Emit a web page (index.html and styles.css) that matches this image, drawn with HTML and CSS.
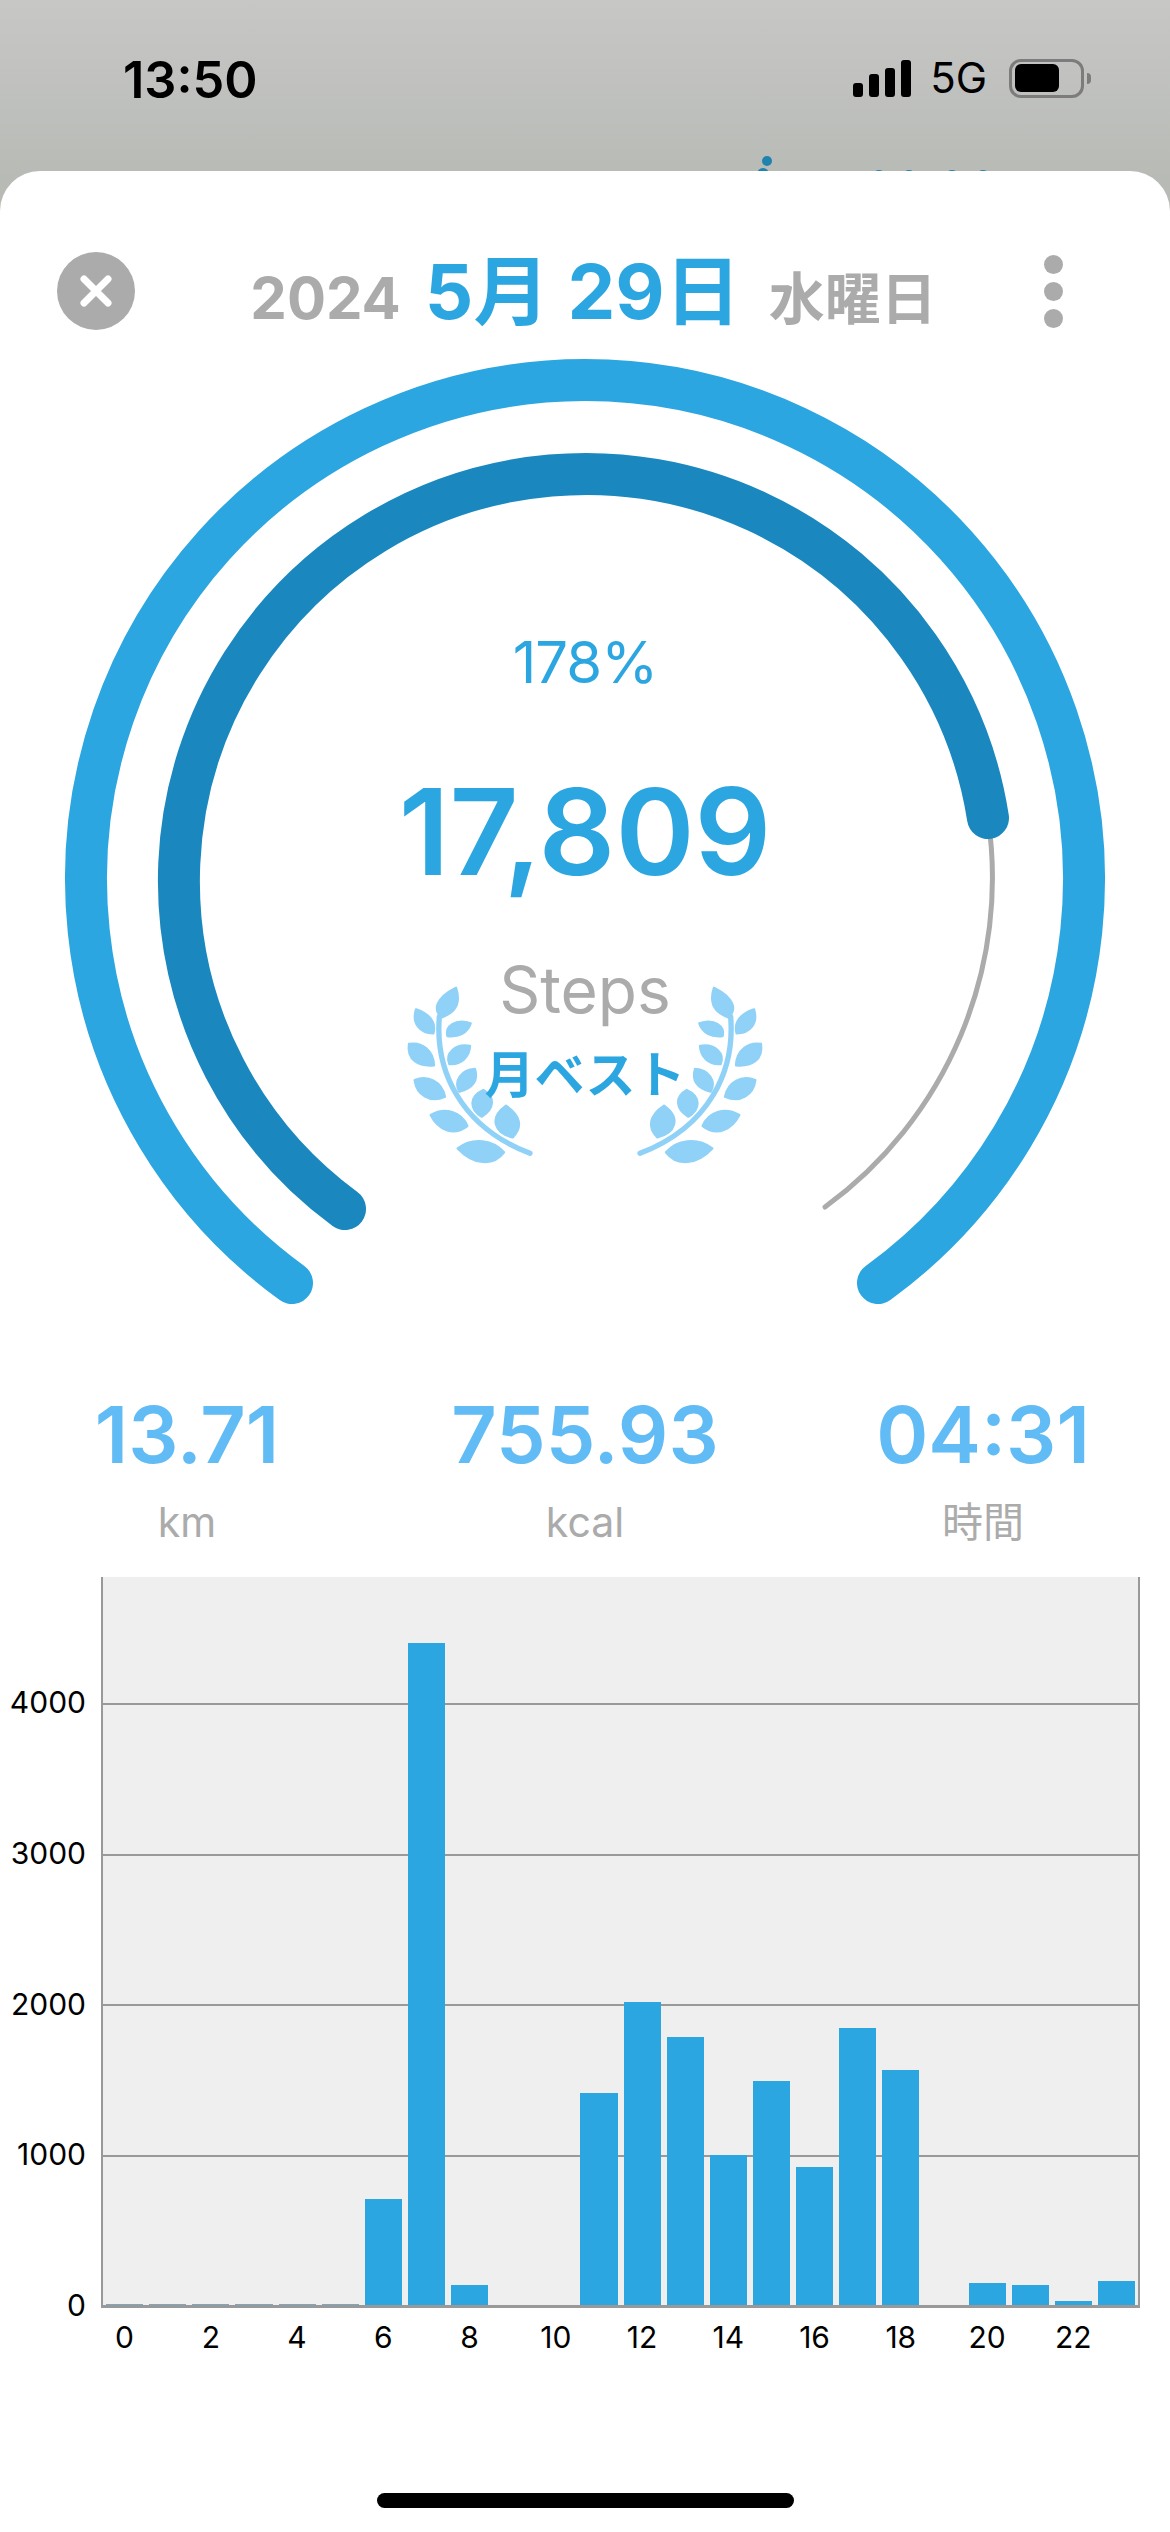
FILE: index.html
```html
<!DOCTYPE html>
<html lang="ja">
<head>
  <meta charset="UTF-8">
  <title>Steps</title>
  <meta name="viewport" content="width=device-width, initial-scale=1.0">
  <link rel="stylesheet" href="styles.css">
</head>
<body>
  <div class="status">
    <div class="time">13:50</div>
    <div class="status-right">
      <div class="signal">
        <span class="sig1"></span><span class="sig2"></span><span class="sig3"></span><span class="sig4"></span>
      </div>
      <div class="net">5G</div>
      <div class="battery"><div class="battery-fill"></div></div>
      <div class="battery-nub"></div>
    </div>
    <span class="peek-dot peek-a"></span>
    <span class="peek-dot peek-b"></span>
    <span class="peek-dot peek-c"></span>
    <span class="peek-dot peek-d"></span>
    <span class="peek-dot peek-e"></span>
    <span class="peek-dot peek-f"></span>
  </div>

  <div class="sheet">
    <div class="header">
      <div class="close">
        <svg width="32" height="32" viewBox="0 0 32 32">
          <path d="M4 4 L28 28 M28 4 L4 28" fill="none" stroke="#fff" stroke-width="7" stroke-linecap="round"/>
        </svg>
      </div>
      <div class="date">
        <span class="year">2024</span>
        <span class="day">5月 29日</span>
        <span class="weekday">水曜日</span>
      </div>
      <div class="more"><span></span><span></span><span></span></div>
    </div>

    <div class="gauge">
      <svg class="rings" width="1170" height="1045" viewBox="0 0 1170 1045">
        <path class="ring-outer" d="M292 953 A499 499 0 1 1 878 953"/>
        <path class="ring-goal" d="M988 488 A407 407 0 0 1 825 877"/>
        <path class="ring-inner" d="M345 879 A407 407 0 1 1 988 488"/>
      </svg>
      <div class="percent">178%</div>
      <div class="steps">17,809</div>
      <div class="steps-label">Steps</div>
      <svg class="laurel" width="410" height="260" viewBox="0 0 1230 780">
        <defs>
          <g id="branch">
            <path class="laurel-stem" d="M178 290 C165 450 240 620 450 700"/>
            <path d="M185 292 C160 270 165 235 228 203 C240 240 235 275 185 292Z"/>
            <path d="M160 340 C120 340 95 310 108 268 C145 280 170 305 160 340Z"/>
            <path d="M202 348 C195 320 225 295 272 310 C262 340 235 352 202 348Z"/>
            <path d="M162 436 C115 440 80 420 87 372 C125 365 160 390 162 436Z"/>
            <path d="M208 432 C195 400 225 370 270 378 C268 410 245 435 208 432Z"/>
            <path d="M195 530 C150 550 110 525 104 480 C145 465 185 485 195 530Z"/>
            <path d="M238 515 C220 480 245 450 285 447 C295 480 280 505 238 515Z"/>
            <path d="M262 618 C220 650 175 630 152 585 C195 560 245 575 262 618Z"/>
            <path d="M305 590 C270 570 265 530 310 510 C345 530 345 565 305 590Z"/>
            <path d="M372 697 C340 740 280 735 233 685 C280 650 340 660 372 697Z"/>
            <path d="M398 652 C345 640 325 595 378 557 C420 585 430 620 398 652Z"/>
          </g>
        </defs>
        <use href="#branch"/>
        <use href="#branch" transform="translate(1230 0) scale(-1 1)"/>
      </svg>
      <div class="best">月ベスト</div>
    </div>

    <div class="stats">
      <div class="stat"><div class="stat-value">13.71</div><div class="stat-label">km</div></div>
      <div class="stat"><div class="stat-value">755.93</div><div class="stat-label">kcal</div></div>
      <div class="stat"><div class="stat-value">04:31</div><div class="stat-label">時間</div></div>
    </div>

    <div class="chart">
      <div class="y-labels">
        <span>4000</span><span>3000</span><span>2000</span><span>1000</span><span>0</span>
      </div>
      <div class="plot">
        <div class="grid-lines"><i></i><i></i><i></i><i></i></div>
        <div class="bars">
          <div class="bar faint" style="height:1px"></div>
          <div class="bar faint" style="height:1px"></div>
          <div class="bar faint" style="height:1px"></div>
          <div class="bar faint" style="height:1px"></div>
          <div class="bar faint" style="height:1px"></div>
          <div class="bar faint" style="height:1px"></div>
          <div class="bar" style="height:106px"></div>
          <div class="bar" style="height:662px"></div>
          <div class="bar" style="height:20px"></div>
          <div class="bar" style="height:0"></div>
          <div class="bar" style="height:0"></div>
          <div class="bar" style="height:212px"></div>
          <div class="bar" style="height:303px"></div>
          <div class="bar" style="height:268px"></div>
          <div class="bar" style="height:150px"></div>
          <div class="bar" style="height:224px"></div>
          <div class="bar" style="height:138px"></div>
          <div class="bar" style="height:277px"></div>
          <div class="bar" style="height:235px"></div>
          <div class="bar" style="height:0"></div>
          <div class="bar" style="height:22px"></div>
          <div class="bar" style="height:20px"></div>
          <div class="bar" style="height:4px"></div>
          <div class="bar" style="height:24px"></div>
        </div>
      </div>
      <div class="x-labels">
        <span>0</span><span></span><span>2</span><span></span><span>4</span><span></span>
        <span>6</span><span></span><span>8</span><span></span><span>10</span><span></span>
        <span>12</span><span></span><span>14</span><span></span><span>16</span><span></span>
        <span>18</span><span></span><span>20</span><span></span><span>22</span><span></span>
      </div>
    </div>

    <div class="home-bar"></div>
  </div>
</body>
</html>
```

FILE: styles.css
```css
:root {
  --blue: #2ca6e0;
  --blue-dark: #1a88bf;
  --blue-light: #61bbf5;
  --leaf: #8fd1f7;
  --gray: #ababab;
  --axis: #999999;
}

* {
  box-sizing: border-box;
  margin: 0;
  padding: 0;
}

html, body {
  width: 1170px;
  height: 2532px;
  overflow: hidden;
}

body {
  background: linear-gradient(#c7c8c6, #b8bab6 180px);
  font-family: Inter, "Noto Sans CJK JP", sans-serif;
  color: #000;
}

/* status bar */
.status {
  position: relative;
  height: 171px;
  display: flex;
  justify-content: space-between;
  align-items: flex-start;
  padding: 52px 79px 0 123px;
}

.time {
  font-size: 50.5px;
  line-height: 56px;
  font-weight: 600;
}

.status-right {
  display: flex;
  align-items: center;
  height: 56px;
  margin-top: -2px;
}

.signal {
  display: flex;
  align-items: flex-end;
  gap: 6px;
  height: 37px;
  margin-right: 19px;
}

.signal span {
  width: 10px;
  background: #000;
  border-radius: 3px;
}

.sig1 { height: 14px; }
.sig2 { height: 23px; }
.sig3 { height: 29px; }
.sig4 { height: 37px; }

.net {
  font-size: 42px;
  line-height: 56px;
  margin-right: 22px;
}

.battery {
  width: 75px;
  height: 39px;
  border: 3px solid #7c7c7c;
  border-radius: 12px;
  padding: 2px 3px;
}

.battery-fill {
  width: 44px;
  height: 28px;
  background: #000;
  border-radius: 6px;
}

.battery-nub {
  width: 4px;
  height: 11px;
  margin-left: 3px;
  background: #7c7c7c;
  border-radius: 0 4px 4px 0;
}

.peek-dot {
  position: absolute;
  background: #1f83ad;
  border-radius: 50%;
}

.peek-a { left: 762px; top: 156px; width: 10px; height: 10px; }
.peek-b { left: 757px; top: 168px; width: 12px; height: 12px; }
.peek-c { left: 874px; top: 170px; width: 10px; height: 6px; }
.peek-d { left: 904px; top: 170px; width: 10px; height: 6px; }
.peek-e { left: 947px; top: 170px; width: 10px; height: 6px; }
.peek-f { left: 978px; top: 170px; width: 10px; height: 6px; }

/* sheet */
.sheet {
  position: relative;
  height: 2361px;
  background: #fff;
  border-radius: 40px 40px 0 0;
  padding-top: 81px;
}

.header {
  height: 78px;
  display: flex;
  align-items: center;
  justify-content: space-between;
  padding: 0 107px 0 57px;
}

.close {
  width: 78px;
  height: 78px;
  border-radius: 50%;
  background: var(--gray);
  display: flex;
  align-items: center;
  justify-content: center;
}

.date {
  display: flex;
  align-items: baseline;
  gap: 28px;
  margin: 0 0 10px 8px;
  color: var(--gray);
  font-weight: 700;
}

.year {
  font-size: 58px;
}

.day {
  font-size: 76px;
  margin-left: -4px;
  color: var(--blue);
}

.weekday {
  font-size: 56px;
}

.more {
  display: flex;
  flex-direction: column;
  gap: 8px;
}

.more span {
  width: 19px;
  height: 19px;
  border-radius: 50%;
  background: var(--gray);
}

/* gauge */
.gauge {
  position: relative;
  height: 1045px;
}

.rings {
  display: block;
}

.rings path {
  fill: none;
  stroke-linecap: round;
}

.ring-outer {
  stroke: var(--blue);
  stroke-width: 42;
}

.ring-inner {
  stroke: var(--blue-dark);
  stroke-width: 42;
}

.ring-goal {
  stroke: var(--gray);
  stroke-width: 5;
}

.percent,
.steps,
.steps-label,
.best {
  position: absolute;
  left: 0;
  right: 0;
  text-align: center;
}

.percent {
  top: 296px;
  font-size: 58px;
  line-height: 72px;
  letter-spacing: -1px;
  color: var(--blue);
}

.steps {
  top: 432px;
  font-size: 120px;
  line-height: 140px;
  font-weight: 600;
  color: var(--blue);
}

.steps-label {
  top: 620px;
  font-size: 64px;
  line-height: 80px;
  color: var(--gray);
}

.laurel {
  position: absolute;
  left: 380px;
  top: 590px;
}

.laurel path {
  fill: var(--leaf);
  stroke: var(--leaf);
  stroke-width: 7;
  stroke-linejoin: round;
}

.laurel .laurel-stem {
  fill: none;
  stroke-width: 16;
  stroke-linecap: round;
}

.best {
  top: 710px;
  font-size: 50px;
  line-height: 70px;
  font-weight: 700;
  color: var(--blue);
}

/* totals */
.stats {
  display: grid;
  grid-template-columns: repeat(3, 300px);
  column-gap: 98px;
  justify-content: center;
  text-align: center;
  padding-top: 14px;
}

.stat-value {
  font-size: 79px;
  line-height: 90px;
  font-weight: 600;
  color: var(--blue-light);
}

.stat-label {
  font-size: 41px;
  line-height: 60px;
  margin-top: 13px;
  color: var(--gray);
}

/* hourly chart */
.chart {
  display: grid;
  grid-template-columns: 101px 1039px;
  grid-template-rows: 731px auto;
  margin-top: 25px;
}

.y-labels {
  position: relative;
  font-size: 30px;
  line-height: 36px;
}

.y-labels span {
  position: absolute;
  right: 15px;
}

.y-labels span:nth-child(1) { top: 107px; }
.y-labels span:nth-child(2) { top: 258px; }
.y-labels span:nth-child(3) { top: 409px; }
.y-labels span:nth-child(4) { top: 559px; }
.y-labels span:nth-child(5) { top: 710px; }

.plot {
  position: relative;
  background: #efefef;
  border: solid var(--axis);
  border-width: 0 2px 3px 2px;
}

.grid-lines {
  position: absolute;
  left: 0;
  right: 0;
  bottom: 0;
  height: 728px;
  display: flex;
  flex-direction: column;
  justify-content: flex-end;
}

.grid-lines i {
  display: block;
  height: 150.4px;
  border-top: 2px solid var(--axis);
}

.bars {
  position: absolute;
  inset: 0;
  display: grid;
  grid-template-columns: repeat(24, 1fr);
  align-items: end;
}

.bar {
  margin: 0 3px;
  background: var(--blue);
}

.bar.faint {
  background: #7fa6bd;
}

.x-labels {
  grid-column: 2;
  display: grid;
  grid-template-columns: repeat(24, 1fr);
  padding: 0 2px;
  font-size: 30px;
  line-height: 40px;
  margin-top: 9px;
}

.x-labels span {
  justify-self: center;
  white-space: nowrap;
}

.home-bar {
  position: absolute;
  left: 377px;
  top: 2322px;
  width: 417px;
  height: 15px;
  border-radius: 8px;
  background: #000;
}
```
